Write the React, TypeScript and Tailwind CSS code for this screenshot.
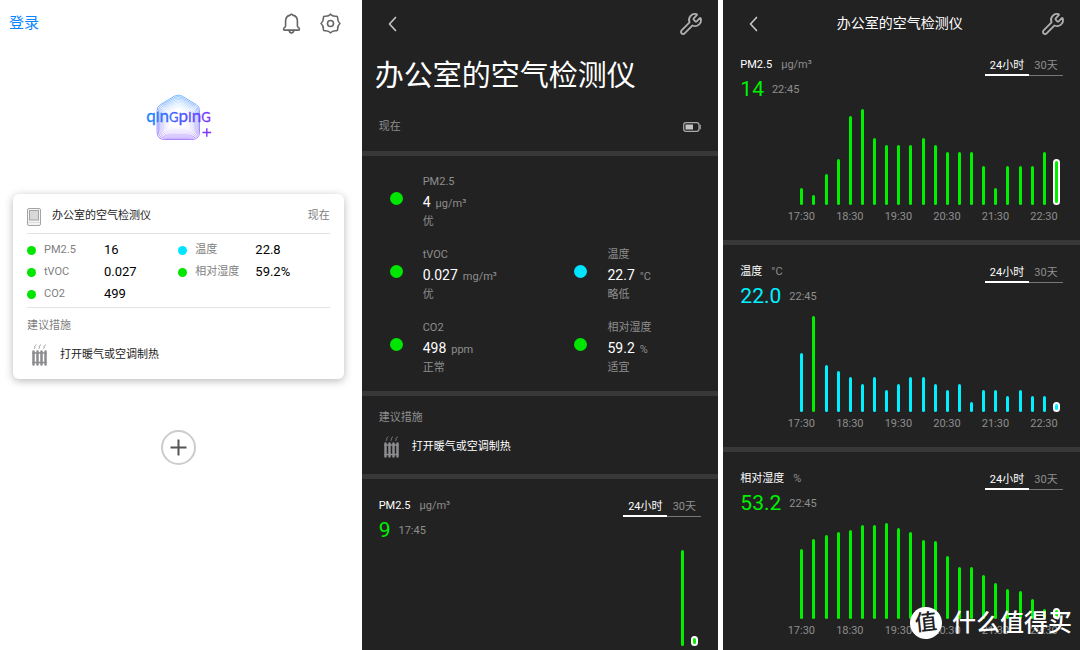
import React, { useState } from 'react';
import { Wrench } from 'lucide-react';

type Tone = 'green' | 'cyan';

interface Metric {
  label: string;
  value: string;
  unit?: string;
  level?: string;
  tone: Tone;
}

const DEVICE_NAME = '办公室的空气检测仪';

const summary: Metric[] = [
  { label: 'PM2.5', value: '16', tone: 'green' },
  { label: '温度', value: '22.8', tone: 'cyan' },
  { label: 'tVOC', value: '0.027', tone: 'green' },
  { label: '相对湿度', value: '59.2%', tone: 'green' },
  { label: 'CO2', value: '499', tone: 'green' },
];

const details: Metric[] = [
  { label: 'PM2.5', value: '4', unit: 'μg/m³', level: '优', tone: 'green' },
  { label: 'tVOC', value: '0.027', unit: 'mg/m³', level: '优', tone: 'green' },
  { label: '温度', value: '22.7', unit: '°C', level: '略低', tone: 'cyan' },
  { label: 'CO2', value: '498', unit: 'ppm', level: '正常', tone: 'green' },
  { label: '相对湿度', value: '59.2', unit: '%', level: '适宜', tone: 'green' },
];

const hours = ['17:30', '18:30', '19:30', '20:30', '21:30', '22:30'];

const pmBars = [17, 10, 31, 46, 89, 96, 67, 60, 60, 60, 67, 60, 53, 53, 53, 39, 17, 39, 39, 39, 53, 46];
const tempBars = [59, 96, 47, 41, 35, 28, 35, 22, 28, 35, 35, 28, 22, 28, 10, 22, 22, 16, 22, 16, 16, 10];
const humidityBars = [70, 80, 84, 87, 89, 94, 94, 96, 91, 87, 79, 78, 63, 52, 52, 44, 36, 30, 28, 20, 10, 11];
const recentBars = [0, 0, 0, 0, 0, 0, 0, 0, 0, 0, 0, 0, 0, 0, 0, 0, 0, 0, 0, 0, 96, 10];

const dotColor = { green: 'bg-[#00e600]', cyan: 'bg-[#00e5ff]' };
const barColor = { green: 'bg-[#00f000]', cyan: 'bg-[#00f0ff]' };
const valueColor = { green: 'text-[#00f000]', cyan: 'text-[#00f0ff]' };

const BellIcon = () => (
  <svg className="w-[21px] h-[21px]" viewBox="0 0 21 21" fill="none" stroke="#666" strokeWidth="1.6" strokeLinecap="round" strokeLinejoin="round">
    <path d="M9.200 2.100a1.400 1.400 0 0 1 2.600 0c2.900.600 4.600 3 4.600 6v4.600c0 .800.400 1.400 1.200 2 1.300.900 1 2.400-.400 2.400H3.800c-1.400 0-1.700-1.500-.400-2.400.800-.600 1.200-1.200 1.200-2V8.100c0-3 1.700-5.400 4.600-6Z" />
    <path d="M8.200 17.300a2.300 2.600 0 0 0 4.600 0" />
  </svg>
);

const GearIcon = () => (
  <svg className="w-[21px] h-[21px]" viewBox="0 0 21 21" fill="none" stroke="#666" strokeWidth="1.6" strokeLinejoin="round">
    <path d="M10.500 1.100C12 3.300 13.700 3.500 16.500 3.200Q17.500 3.300 17.600 4.400C17.400 7 17.800 8.500 19.900 10.500C17.800 12.500 17.400 14 17.600 16.600Q17.500 17.700 16.500 17.800C13.700 17.500 12 17.700 10.500 19.900C9 17.700 7.300 17.500 4.500 17.800Q3.500 17.700 3.400 16.600C3.600 14 3.200 12.500 1.100 10.500C3.200 8.500 3.600 7 3.400 4.400Q3.500 3.300 4.500 3.200C7.300 3.500 9 3.300 10.500 1.100Z" />
    <circle cx="10.5" cy="10.5" r="3" />
  </svg>
);

const BackIcon = () => (
  <svg className="w-[10px] h-[16px]" viewBox="0 0 10 16" fill="none" stroke="#c4c4c4" strokeWidth="1.7" strokeLinecap="round" strokeLinejoin="round">
    <path d="M8.500 1.500 2.500 8l6 6.500" />
  </svg>
);

const BatteryIcon = () => (
  <svg className="w-[18px] h-[10px]" viewBox="0 0 18 10" fill="none">
    <rect x="0.7" y="0.7" width="15.3" height="8.6" rx="2.3" stroke="#aaa" strokeWidth="1.2" />
    <path d="M17.200 3.200v3.600" stroke="#aaa" strokeWidth="1.2" strokeLinecap="round" />
    <rect x="2.5" y="2.5" width="7.5" height="5" fill="#c4c4c4" />
  </svg>
);

const DeviceIcon = () => (
  <svg className="w-[14px] h-[18px]" viewBox="0 0 14 18" fill="none" stroke="#a4a4a4">
    <rect x="0.5" y="0.5" width="13" height="17" rx="1.5" fill="#f4f4f4" />
    <rect x="2.5" y="2.5" width="9" height="9.5" fill="#d8d8d8" />
    <path d="M1 14.500h12" stroke="#ddd" />
  </svg>
);

const RadiatorIcon = () => (
  <svg className="w-[15px] h-[22px]" viewBox="0 0 15 22" fill="none" stroke="#8c8c90" strokeLinecap="round">
    <path d="M1.500 7.500v13M5.500 7.500v13M9.500 7.500v13M13.500 7.500v13" strokeWidth="2.5" />
    <path d="M1 9h13M1 18.500h13" strokeWidth="1.4" />
    <path d="M4 1C1.200 2.500 3.800 2.800 2.400 4.500M8.700 1C5.900 2.500 8.500 2.800 7.100 4.500M13.400 1C10.600 2.500 13.200 2.800 11.800 4.500" strokeWidth="0.9" />
  </svg>
);

const Logo = () => (
  <svg className="w-[72px] h-[50px]" viewBox="0 0 72 50" fill="none">
    <defs>
      <linearGradient id="house" x1="0" y1="-24" x2="0" y2="22" gradientUnits="userSpaceOnUse">
        <stop offset="0" stopColor="#3a9cff" />
        <stop offset="1" stopColor="#8a55ff" />
      </linearGradient>
      <linearGradient id="word" x1="3" y1="0" x2="70" y2="0" gradientUnits="userSpaceOnUse">
        <stop offset="0" stopColor="#1586ff" />
        <stop offset="1" stopColor="#7a35ff" />
      </linearGradient>
    </defs>
    {[1, 0.94, 0.88, 0.82, 0.76, 0.7, 0.64, 0.58, 0.52, 0.46].map((scale) => (
      <path
        key={scale}
        transform={`translate(36.3 26.5) scale(${scale})`}
        d="M-4-22.300Q0-24.500 4-22.300L18-13.800Q21.200-11.800 21.200-8V13.500Q21.200 21 13.500 21H-13.500Q-21.200 21-21.200 13.500V-8Q-21.200-11.800-18-13.800Z"
        stroke="url(#house)"
        strokeWidth="0.9"
        opacity={scale * scale * 0.8}
      />
    ))}
    <text x="36.5" y="30" textAnchor="middle" fill="url(#word)" stroke="url(#word)" strokeWidth="0.3" fontFamily="Lato, sans-serif" fontSize="17">
      q<tspan fontSize="13">I</tspan>n<tspan fontSize="13">G</tspan>p<tspan fontSize="13">I</tspan>n<tspan fontSize="13">G</tspan>
    </text>
    <path d="M60.500 40.500h8.600M64.800 36.200v8.600" stroke="#7a35ff" strokeWidth="1.4" />
  </svg>
);

const Advice = ({ dark = false }: { dark?: boolean }) => (
  <>
    <h3 className={dark ? 'text-[11px] leading-5 text-[#8e8e8e]' : 'text-[11px] leading-5 text-[#808080]'}>建议措施</h3>
    <div className="mt-[7px] flex h-6 items-center gap-[13px] pl-[5px]">
      <RadiatorIcon />
      <p className={dark ? 'text-[11px] text-white' : 'text-[11px] text-[#222]'}>打开暖气或空调制热</p>
    </div>
  </>
);

const NavBar = ({ title }: { title?: string }) => (
  <header className="flex h-[47px] items-center justify-between pr-[15px] pl-[25px]">
    <button type="button" aria-label="返回">
      <BackIcon />
    </button>
    {title && <h2 className="text-[14px] text-white">{title}</h2>}
    <button type="button" aria-label="设置">
      <Wrench size={24} strokeWidth={1.8} color="#b0b0b0" />
    </button>
  </header>
);

interface ChartProps {
  title: string;
  unit: string;
  value: string;
  time: string;
  bars: number[];
  tone?: Tone;
  labels?: string[];
  // indexes of bars that were in the comfortable range
  greenBars?: number[];
}

const Chart: React.FC<ChartProps> = ({ title, unit, value, time, bars, tone = 'green', labels = [], greenBars = [] }) => {
  const [range, setRange] = useState('day');

  return (
    <section className="px-[17px] pt-[17px] pb-[13px] text-[11px]">
      <div className="flex items-start justify-between">
        <h3 className="flex gap-[9px] leading-5 text-white">
          {title}
          <span className="text-[#8e8e8e]">{unit}</span>
        </h3>
        <div className="flex">
          {[
            { id: 'day', name: '24小时', width: 'w-[44px]' },
            { id: 'month', name: '30天', width: 'w-[34px]' },
          ].map((tab) => (
            <button
              key={tab.id}
              type="button"
              onClick={() => setRange(tab.id)}
              className={`h-[21px] leading-[21px] ${tab.width} ${
                range === tab.id ? 'border-b-2 border-white text-white' : 'border-b border-[#777] text-[#8e8e8e]'
              }`}
            >
              {tab.name}
            </button>
          ))}
        </div>
      </div>
      <div className="mt-[2px] flex h-6 items-center gap-2">
        <span className={`text-[21px] ${valueColor[tone]}`}>{value}</span>
        <span className="text-[#8e8e8e]">{time}</span>
      </div>
      <div className="mt-[7px] mr-[5px] ml-[60px] flex h-24 items-end justify-between">
        {bars.map((height, i) => {
          const color = barColor[greenBars.includes(i) ? 'green' : tone];
          const shape = i === bars.length - 1 ? '-mx-[2px] w-[7px] border-2 border-white' : 'w-[3px]';
          return <div key={i} className={`rounded-full ${shape} ${color}`} style={{ height }} />;
        })}
      </div>
      {labels.length > 0 && (
        <div className="mt-[2px] mr-[19px] ml-[61px] flex justify-between leading-5 text-[#8e8e8e]">
          {labels.map((label) => (
            <span key={label} className="flex w-0 justify-center whitespace-nowrap">
              {label}
            </span>
          ))}
        </div>
      )}
    </section>
  );
};

const HomePanel = () => (
  <div className="overflow-hidden bg-white">
    <header className="flex h-[47px] items-center justify-between pr-4 pl-[9px]">
      <a href="#login" className="text-[15px] text-[#0a84ff]">登录</a>
      <div className="flex items-center gap-[18px]">
        <button type="button" aria-label="通知">
          <BellIcon />
        </button>
        <button type="button" aria-label="设置">
          <GearIcon />
        </button>
      </div>
    </header>

    <div className="mt-[45px] flex justify-center">
      <Logo />
    </div>

    {/* Device card */}
    <article className="mx-[13px] mt-[52px] rounded-md bg-white px-[14px] pb-3 shadow-[0_2px_9px_rgba(0,0,0,0.28)]">
      <div className="flex h-10 items-center border-b border-[#e2e2e2] pt-[6px]">
        <DeviceIcon />
        <h2 className="ml-[11px] flex-1 text-[11px] text-[#222]">{DEVICE_NAME}</h2>
        <span className="text-[11px] text-[#808080]">现在</span>
      </div>
      <dl className="grid grid-cols-2 border-b border-[#e2e2e2] pt-[5px] pb-[2px]">
        {summary.map((item) => (
          <div key={item.label} className="flex h-[22px] items-center">
            <span className={`mr-2 size-[9px] rounded-full ${dotColor[item.tone]}`} />
            <dt className="w-[60px] text-[11px] text-[#808080]">{item.label}</dt>
            <dd className="text-[13px] text-black">{item.value}</dd>
          </div>
        ))}
      </dl>
      <div className="pt-2">
        <Advice />
      </div>
    </article>

    <div className="mt-[51px] flex justify-center">
      <button type="button" aria-label="添加设备" className="flex size-[35px] items-center justify-center rounded-full border-2 border-[#ccc]">
        <svg className="w-[17px] h-[17px]" viewBox="0 0 17 17" stroke="#555" strokeWidth="2">
          <path d="M0.500 8.500h16M8.500 0.500v16" />
        </svg>
      </button>
    </div>
  </div>
);

const DetailPanel = () => (
  <div className="overflow-hidden bg-[#222]">
    <div className="border-b-[5px] border-[#383838] pb-[14px]">
      <NavBar />
      <h1 className="mt-[9px] pl-[13px] text-[29px] leading-10 text-white">{DEVICE_NAME}</h1>
      <div className="mt-[21px] flex items-center justify-between px-[17px]">
        <span className="text-[11px] leading-5 text-[#8e8e8e]">现在</span>
        <BatteryIcon />
      </div>
    </div>

    <dl className="grid grid-cols-[185fr_144fr] gap-y-[13px] border-b-[5px] border-[#383838] pt-4 pb-[13px] pl-7">
      {details.map((item, i) => (
        <div key={item.label} className={`flex items-start gap-5 text-[11px] leading-5 text-[#8e8e8e] ${i === 0 ? 'col-span-2' : ''}`}>
          <span className={`mt-5 size-[13px] rounded-full ${dotColor[item.tone]}`} />
          <div>
            <dt>{item.label}</dt>
            <dd className="flex h-5 items-baseline gap-[5px]">
              <span className="text-[14px] leading-5 text-white">{item.value}</span>
              {item.unit}
            </dd>
            <dd>{item.level}</dd>
          </div>
        </div>
      ))}
    </dl>

    <section className="border-b-[5px] border-[#383838] px-[17px] pt-3 pb-[15px]">
      <Advice dark />
    </section>

    <Chart title="PM2.5" unit="μg/m³" value="9" time="17:45" bars={recentBars} />
  </div>
);

const HistoryPanel = () => (
  <div className="relative overflow-hidden bg-[#222]">
    <NavBar title={DEVICE_NAME} />
    <div className="-mt-[9px] divide-y-[5px] divide-[#383838]">
      <Chart title="PM2.5" unit="μg/m³" value="14" time="22:45" bars={pmBars} labels={hours} />
      <Chart title="温度" unit="°C" value="22.0" time="22:45" bars={tempBars} labels={hours} tone="cyan" greenBars={[1]} />
      <Chart title="相对湿度" unit="%" value="53.2" time="22:45" bars={humidityBars} labels={hours} />
    </div>

    {/* Watermark */}
    <div className="absolute right-2 bottom-[11px] flex items-center gap-[10px] text-white">
      <span className="flex size-8 -rotate-6 items-center justify-center rounded-full bg-white text-[22px] leading-none font-medium text-[#222]">
        值
      </span>
      <span className="text-[24px] leading-8 font-medium">什么值得买</span>
    </div>
  </div>
);

export default function App() {
  return (
    <main className="grid h-screen grid-cols-3 gap-[5px] overflow-hidden bg-white font-['Roboto','Noto_Sans_CJK_SC',sans-serif]">
      <HomePanel />
      <DetailPanel />
      <HistoryPanel />
    </main>
  );
}
